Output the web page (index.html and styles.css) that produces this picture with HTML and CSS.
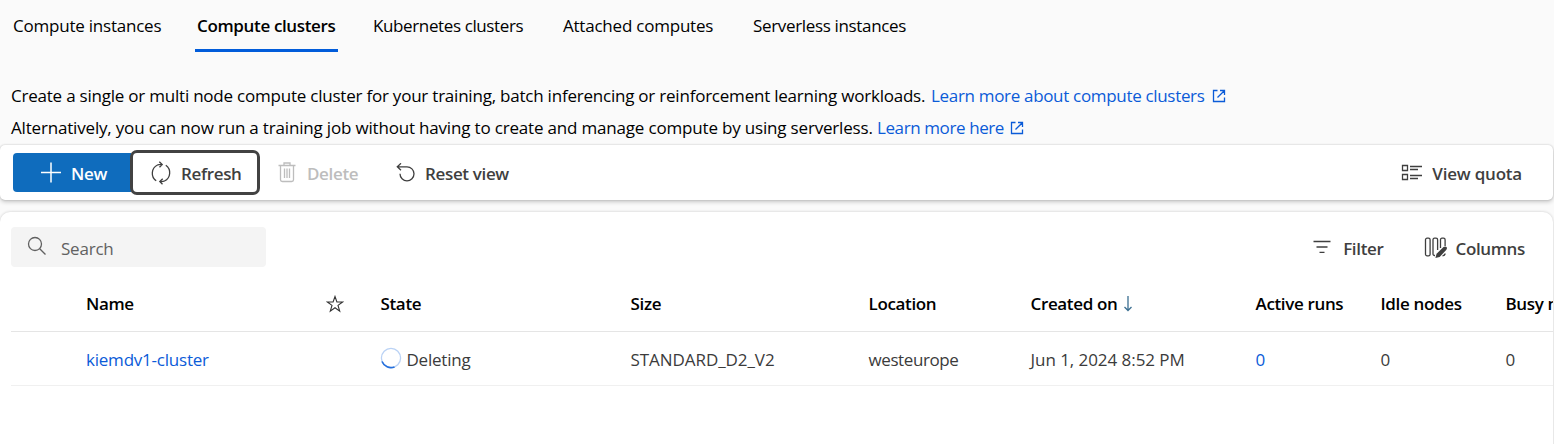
FILE: index.html
```
<!DOCTYPE html>
<html lang="en">
<head>
<meta charset="utf-8">
<title>Compute clusters</title>
<link rel="stylesheet" href="styles.css">
</head>
<body>
<nav class="tabs">
  <a class="tab tab-instances"><span class="t">Compute instances</span></a>
  <a class="tab tab-clusters active"><span class="t">Compute clusters</span></a>
  <a class="tab tab-kubernetes"><span class="t">Kubernetes clusters</span></a>
  <a class="tab tab-attached"><span class="t">Attached computes</span></a>
  <a class="tab tab-serverless"><span class="t">Serverless instances</span></a>
</nav>
<section class="intro">
  <p class="line-one"><span class="t">Create a single or multi node compute cluster for your training, batch inferencing or reinforcement learning workloads.</span>
    <a class="link"><span class="t">Learn more about compute clusters</span><svg class="external" viewBox="0 0 14 14"><path d="M5.5 1.5H1.5V12.5H12.5V8.5M8 1.5H12.5V6M12.3 1.7L5.5 8.5"/></svg></a></p>
  <p class="line-two"><span class="t">Alternatively, you can now run a training job without having to create and manage compute by using serverless.</span>
    <a class="link"><span class="t">Learn more here</span><svg class="external" viewBox="0 0 14 14"><path d="M5.5 1.5H1.5V12.5H12.5V8.5M8 1.5H12.5V6M12.3 1.7L5.5 8.5"/></svg></a></p>
</section>
<div class="toolbar">
  <button class="btn btn-new"><svg class="icon" width="22" height="22" viewBox="0 0 22 22"><path class="plus" d="M11 .5V20.5M1 10.5H21"/></svg><span class="t">New</span></button>
  <button class="btn btn-refresh"><svg class="icon" width="22" height="24" viewBox="0 0 22 24"><path d="M6.2 19.8A9.2 9.2 0 0 1 7.5 4Q9 3.3 12 3.5M9.3 .8L12.2 3.5L9.5 6.3M15.8 4.2A9.2 9.2 0 0 1 14.5 20Q13 20.7 10 20.5M12.7 17.7L9.8 20.5L12.5 23.2"/></svg><span class="t">Refresh</span></button>
  <button class="btn btn-delete"><svg class="icon" width="18" height="22" viewBox="0 0 18 22"><path d="M.5 3.5H17.5M2.5 3.5V17.7Q2.5 19.5 4.3 19.5H13.7Q15.5 19.5 15.5 17.7V3.5M6 3.5V1H12V3.5M6.5 6.5V16M9 6.5V16M11.5 6.5V16"/></svg><span class="t">Delete</span></button>
  <button class="btn btn-reset"><svg class="icon" width="20" height="20" viewBox="0 0 20 20"><path d="M1.5 3.8H11A7 7 0 1 1 4 10.8M5 .3L1.3 3.8L5 7.3"/></svg><span class="t">Reset view</span></button>
  <button class="btn btn-quota"><svg class="icon" width="22" height="18" viewBox="0 0 22 18"><path d="M1.5 1.5H6.5V6.5H1.5ZM1.5 10.5H6.5V15.5H1.5ZM9 2.5H21M9 5.5H17M9 11.5H21M9 14.5H17"/></svg><span class="t">View quota</span></button>
</div>
<main class="panel">
  <div class="panel-tools">
    <div class="search"><svg class="icon" width="20" height="20" viewBox="0 0 20 20"><circle cx="8" cy="8" r="6.5"/><path d="M12.7 12.7L18.5 18.5"/></svg><span class="t">Search</span></div>
    <button class="btn btn-filter"><svg class="icon" width="18" height="14" viewBox="0 0 18 14"><path d="M.5 1.5H17.5M3.5 7H14.5M6.5 12.3H11.5"/></svg><span class="t">Filter</span></button>
    <button class="btn btn-columns"><svg class="icon" width="24" height="22" viewBox="0 0 24 22"><rect x="1.5" y="2.2" width="4.6" height="17.6" rx="1.6"/><path d="M11 19.5H10.5Q9 19.5 9 18V3.8Q9 2.2 10.5 2.2H12Q13.6 2.2 13.6 3.8V14M16.5 12V3.8Q16.5 2.2 18 2.2H19.5Q21.1 2.2 21.1 3.8V10M18.5 19.8Q21.1 19.5 21.1 17.5"/><path class="solid" d="M11.4 22L12.6 17.7L19.5 11Q21.4 9.8 22.5 11.1Q23.5 12.4 22.2 14.1L15.6 21Z"/></svg><span class="t">Columns</span></button>
  </div>
  <div class="row head">
    <span><span class="t">Name</span></span>
    <span><svg class="star" width="18" height="18" viewBox="0 0 18 18"><path d="M9 1.5L10.9 7H16.6L12 10.4L13.7 16.1L9 12.7L4.3 16.1L6 10.4L1.4 7H7.1Z"/></svg></span>
    <span><span class="t">State</span></span>
    <span><span class="t">Size</span></span>
    <span><span class="t">Location</span></span>
    <span class="sorted"><span class="t">Created on</span><svg width="10" height="16" viewBox="0 0 10 16"><path d="M5 0V14.5M1.5 11L5 14.5L8.5 11"/></svg></span>
    <span><span class="t">Active runs</span></span>
    <span><span class="t">Idle nodes</span></span>
    <span><span class="t">Busy nodes</span></span>
  </div>
  <div class="row body">
    <a class="link"><span class="t">kiemdv1-cluster</span></a>
    <span></span>
    <span class="state"><svg width="22" height="22" viewBox="0 0 22 22"><circle cx="11" cy="11" r="9.6"/><path d="M2 14.5A9.6 9.6 0 0 0 14.5 19.9"/></svg><span class="t">Deleting</span></span>
    <span class="size"><span class="t">STANDARD_D2_V2</span></span>
    <span class="location"><span class="t">westeurope</span></span>
    <span class="created"><span class="t">Jun 1, 2024 8:52 PM</span></span>
    <a class="link"><span class="t">0</span></a>
    <span><span class="t">0</span></span>
    <span><span class="t">0</span></span>
  </div>
</main>
</body>
</html>
```
FILE: styles.css
```
* { box-sizing: border-box; }
body {
  margin: 0;
  height: 444px;
  overflow: hidden;
  background: #fafafa;
  color: #000;
  font: 17px/24px "Open Sans", "Noto Sans", sans-serif;
  letter-spacing: -0.22px;
  white-space: nowrap;
}
svg { display: block; flex: none; fill: none; stroke: currentColor; stroke-width: 1.3; }
.link { color: #0b5bd8; }
.tabs { display: flex; height: 52px; padding-left: 11px; }
.tab { height: 52px; padding: 14px 2px 0; border-bottom: 3px solid transparent; }
.tab-instances { width: 152px; margin-right: 32px; }
.tab-clusters { width: 143px; margin-right: 33px; }
.tab-kubernetes { width: 156px; margin-right: 34px; letter-spacing: -0.38px; }
.tab-attached { width: 156px; margin-right: 34px; }
.tab-serverless { letter-spacing: -0.34px; }
.active { border-color: #015cda; font-weight: 600; letter-spacing: -0.35px; }
.intro { height: 92px; padding: 32px 0 0 11px; }
.intro p { display: flex; height: 32px; margin: 0; }
.line-one > .t { width: 920px; }
.line-two > .t { width: 866px; letter-spacing: -0.18px; }
.intro .link { display: flex; gap: 7px; letter-spacing: -0.32px; }
.intro .line-two .link { gap: 6px; letter-spacing: -0.4px; }
.external { width: 14px; height: 14px; margin-top: 5px; }
.toolbar {
  display: flex;
  align-items: center;
  width: 1553px;
  height: 55px;
  margin-top: 1px;
  padding: 0 31px 0 13px;
  border-radius: 5px;
  background: #fff;
  box-shadow: 0 0 2px #0003, 0 2px 4px #0003;
}
.btn {
  display: flex;
  align-items: center;
  padding: 0;
  border: 0;
  background: none;
  color: #3f3f3f;
  font: inherit;
  font-weight: 600;
  letter-spacing: -0.35px;
}
.toolbar .t { padding-top: 2px; }
.btn-new { width: 118px; height: 39px; padding-left: 27px; gap: 9px; border-radius: 4px 0 0 4px; background: #0f6cbd; color: #fff; }
.btn-refresh { width: 130px; height: 45px; margin-left: -1px; padding-left: 17px; gap: 9px; border: 3px solid #424242; border-radius: 7px; background: #fff; }
.btn-delete { margin-left: 18px; width: 118px; gap: 11px; color: #bdbdbd; }
.btn-reset { gap: 9px; }
.btn-quota { margin-left: auto; gap: 9px; letter-spacing: -0.2px; }
.panel { width: 1553px; height: 240px; margin-top: 12px; padding: 15px 0 0 11px; border-radius: 10px 10px 0 0; background: #fff; box-shadow: 0 0 3px #0003; overflow: hidden; }
.panel-tools { display: flex; align-items: center; padding-right: 28px; }
.search { display: flex; align-items: center; width: 255px; height: 40px; margin-right: auto; padding-left: 16px; gap: 14px; border-radius: 4px; background: #f4f4f4; color: #616161; }
.search .t, .panel-tools .btn .t { padding-top: 3px; }
.search .icon { margin-top: -3px; }
.btn-filter { gap: 12px; margin-right: 41px; }
.btn-columns { gap: 7px; }
.row {
  display: grid;
  grid-template-columns: 239px 55.5px 250px 238px 162px 225px 125px 125px 125px;
  align-items: center;
  padding-left: 75px;
}
.head { height: 65px; padding-top: 9px; border-bottom: 1px solid #e5e5e5; font-weight: 600; letter-spacing: -0.35px; }
.body { height: 54px; padding-top: 2px; border-bottom: 1px solid #f0f0f0; color: #3b3b3b; }
.body .link { color: #0b5bd8; }
.star { margin-left: 1px; color: #333; stroke-width: 1.1; }
.sorted, .state { display: flex; align-items: center; gap: 6px; }
.sorted svg { color: #3b6f91; }
.state { gap: 5px; }
.state svg { margin: -3px 0 0 -1px; color: #bad2f5; }
.state path { stroke: #2670dc; stroke-width: 1.6; }
.size { letter-spacing: -0.06px; }
.location { letter-spacing: -0.4px; }
.created { letter-spacing: -0.05px; }
.plus { stroke-width: 1.5; }
.solid { fill: currentColor; stroke: none; }
```
